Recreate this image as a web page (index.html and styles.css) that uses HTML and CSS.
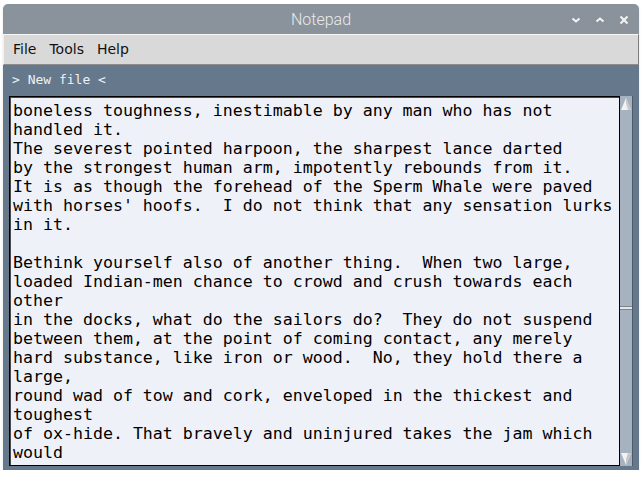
FILE: index.html
```html
<!DOCTYPE html>
<html>
<head>
<meta charset="utf-8">
<link rel="stylesheet" href="styles.css">
</head>
<body>
<div class="window">
  <div class="titlebar">
    <span class="title">Notepad</span>
    <div class="controls">
      <svg class="ctl" width="10" height="10" viewBox="0 0 10 10"><path d="M1.5 3.5 L5 6.5 L8.5 3.5" fill="none" stroke="#f4f4f4" stroke-width="2"/></svg>
      <svg class="ctl" width="10" height="10" viewBox="0 0 10 10"><path d="M1.5 6.5 L5 3.5 L8.5 6.5" fill="none" stroke="#f4f4f4" stroke-width="2"/></svg>
      <svg class="ctl" width="10" height="10" viewBox="0 0 10 10"><path d="M1.5 1.5 L8.5 8.5 M8.5 1.5 L1.5 8.5" fill="none" stroke="#f4f4f4" stroke-width="2"/></svg>
    </div>
  </div>
  <div class="menubar">
    <span class="menuitem">File</span>
    <span class="menuitem">Tools</span>
    <span class="menuitem">Help</span>
  </div>
  <div class="body">
    <div class="filename">&gt; New file &lt;</div>
    <div class="editor">
      <div class="text">boneless toughness, inestimable by any man who has not
handled it.
The severest pointed harpoon, the sharpest lance darted
by the strongest human arm, impotently rebounds from it.
It is as though the forehead of the Sperm Whale were paved
with horses' hoofs.  I do not think that any sensation lurks
in it.

Bethink yourself also of another thing.  When two large,
loaded Indian-men chance to crowd and crush towards each
other
in the docks, what do the sailors do?  They do not suspend
between them, at the point of coming contact, any merely
hard substance, like iron or wood.  No, they hold there a
large,
round wad of tow and cork, enveloped in the thickest and
toughest
of ox-hide. That bravely and uninjured takes the jam which
would</div>
      <div class="scrollbar">
        <svg class="arrow" width="12" height="14" viewBox="0 0 12 14"><polygon points="6,1 11,13 1,13" fill="#f2f2f2"/><polygon points="6,1 11,13 8,13 6,6" fill="#c8c8c8"/></svg>
        <div class="trough"><div class="grip"></div></div>
        <svg class="arrow" width="12" height="14" viewBox="0 0 12 14"><polygon points="1,1 11,1 6,13" fill="#f2f2f2"/><polygon points="11,1 6,13 6,7 8,1" fill="#c8c8c8"/></svg>
      </div>
    </div>
  </div>
</div>
</body>
</html>
```

FILE: styles.css
```css
html, body {
  margin: 0;
  padding: 0;
  background: #ffffff;
}

.window {
  margin: 4px 0 0 3px;
  width: 636px;
  height: 466px;
  display: flex;
  flex-direction: column;
  border-radius: 5px 5px 0 0;
  overflow: hidden;
  box-shadow: 0 1px 2px rgba(0,0,0,0.15);
}

.titlebar {
  height: 30px;
  flex: none;
  background: #8a929b;
  position: relative;
  display: flex;
  align-items: center;
  justify-content: center;
}

.title {
  font-family: "Roboto", "DejaVu Sans", sans-serif;
  font-weight: 300;
  font-size: 16px;
  color: #e8ebee;
}

.controls {
  position: absolute;
  right: 10px;
  top: 11px;
  display: flex;
  gap: 14px;
}

.ctl {
  display: block;
}

.menubar {
  height: 29px;
  flex: none;
  background: #d9d9d9;
  border-top: 1px solid #f6f6f6;
  border-left: 1px solid #f2f2f2;
  border-right: 1px solid #7d7d7d;
  border-bottom: 1px solid #8c8c8c;
  display: flex;
  align-items: center;
  padding-left: 9px;
  padding-bottom: 2px;
  box-sizing: border-box;
  height: 31px;
  gap: 13px;
  font-family: "DejaVu Sans", sans-serif;
  font-size: 14px;
  color: #111;
}

.body {
  flex: 1;
  background: #66788b;
  padding: 6px 6px 3px 6px;
  display: flex;
  flex-direction: column;
}

.filename {
  font-family: "DejaVu Sans Mono", monospace;
  font-size: 13px;
  line-height: 17px;
  color: #eef2f6;
  margin-left: 3px;
  height: 20px;
}

.editor {
  margin-top: 5px;
  height: 370px;
  display: flex;
}

.text {
  width: 603px;
  height: 361px;
  background: #eef2f8;
  border: 1px solid #000;
  box-shadow: inset 1px 1px 0 #4a4a4a;
  padding: 4px 3px 3px 3px;
  font-family: "DejaVu Sans Mono", monospace;
  font-size: 16.6px;
  line-height: 19px;
  color: #000;
  white-space: pre;
  overflow: hidden;
}

.scrollbar {
  width: 12px;
  background: #a6b2bf;
  border-right: 1px solid #4d5c6c;
  display: flex;
  flex-direction: column;
  padding-top: 1px;
}

.arrow {
  display: block;
  flex: none;
}

.trough {
  flex: 1;
  position: relative;
}

.grip {
  position: absolute;
  left: 0;
  right: 0;
  top: 195px;
  height: 2px;
  background: #e6e6e6;
  border-top: 1px solid #7a8590;
  border-bottom: 1px solid #7a8590;
}
```
